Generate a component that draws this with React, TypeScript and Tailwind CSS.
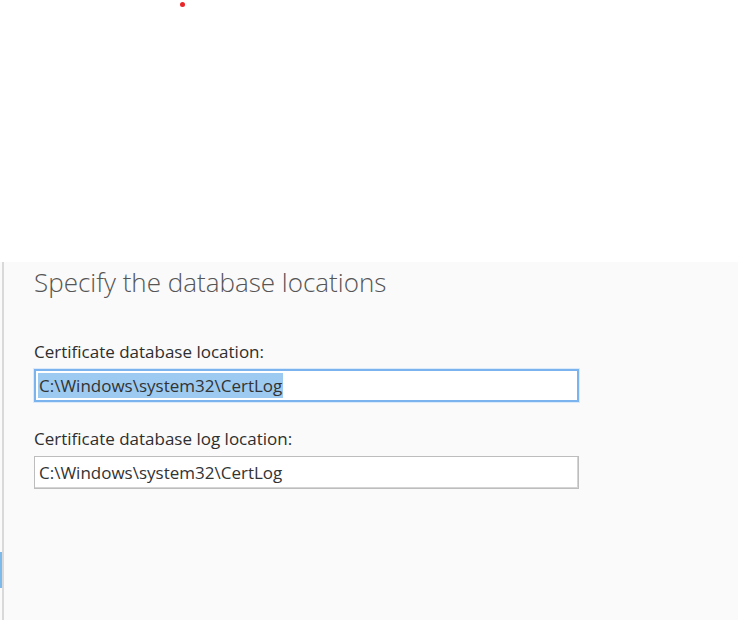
export default function App() {
  return (
    <div className="flex h-[620px] w-[738px] flex-col overflow-hidden bg-white font-['Open_Sans',sans-serif]">
      <div className="h-[262px] shrink-0 pl-[180px] pt-[2px]">
        <div className="h-[5px] w-[5px] rounded-full bg-[#e8262a]" />
      </div>
      <div className="flex min-h-0 flex-1 bg-[#fafafa]">
        <div className="flex w-[2px] shrink-0 flex-col">
          <div className="h-[290px]" />
          <div className="h-[36px] bg-[#7db9ea]" />
        </div>
        <div className="w-[2px] shrink-0 bg-[#d9d9d9]" />
        <main className="flex-1 pl-[30px] pt-[3px]">
          <h1 className="text-[26px] font-light leading-[34px] text-[#555]">
            Specify the database locations
          </h1>
          <label className="mt-[43px] block text-[17px] leading-[20px] text-[#2e2e2e]">
            Certificate database location:
          </label>
          <div className="mt-[7px] flex h-[33px] w-[545px] items-center border-2 border-[#7ab3ee] bg-white pl-[2px] shadow-[0_0_0_1px_#dbeafb]">
            <span className="bg-[#9ccaf0] px-[1px] text-[17px] leading-[25px] text-[#333]">
              C:\Windows\system32\CertLog
            </span>
          </div>
          <label className="mt-[27px] block text-[17px] leading-[20px] text-[#2e2e2e]">
            Certificate database log location:
          </label>
          <div className="mt-[7px] flex h-[33px] w-[545px] items-center border border-[#bdbdbd] bg-white pl-[4px] shadow-[inset_-1px_-1px_0_#d4d4d4]">
            <span className="text-[17px] leading-[25px] text-[#333]">C:\Windows\system32\CertLog</span>
          </div>
        </main>
      </div>
    </div>
  )
}
